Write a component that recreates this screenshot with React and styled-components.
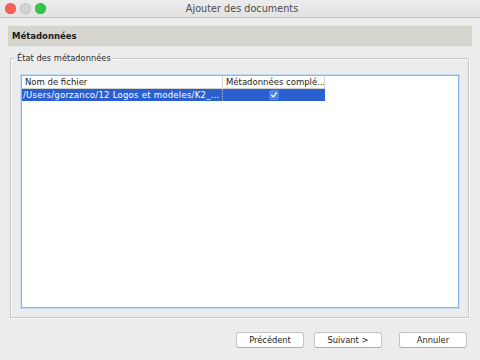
import React from 'react';
import styled, { createGlobalStyle } from 'styled-components';

const Global = createGlobalStyle`
	html, body {
		margin: 0;
		padding: 0;
		background: #ececec;
	}
	body {
		font-family: "DejaVu Sans", "Liberation Sans", sans-serif;
		color: #1c1c1c;
	}
`;

const Window = styled.div`
	width: 480px;
	height: 360px;
	display: flex;
	flex-direction: column;
	background: #ececec;
	overflow: hidden;
`;

const TitleBar = styled.header`
	height: 17px;
	flex: none;
	display: flex;
	align-items: center;
	padding: 0 5px;
	background: linear-gradient(#ececec, #e2e2e2);
	border-bottom: 1px solid #c4c4c4;
	.title {
		flex: 1;
		text-align: center;
		font-size: 9.7px;
		color: #4d4d4d;
		margin-right: 40px;
	}
`;

const Lights = styled.div`
	display: flex;
	gap: 4px;
	width: 44px;
`;

const Light = styled.span`
	width: 11px;
	height: 11px;
	border-radius: 50%;
	background: ${(p) => p.color};
	box-shadow: inset 0 0 0 0.5px rgba(0, 0, 0, 0.15);
`;

const Body = styled.div`
	flex: 1;
	display: flex;
	flex-direction: column;
	padding: 8px 8px 0;
`;

const SectionHeader = styled.div`
	height: 20px;
	display: flex;
	align-items: center;
	padding-left: 4px;
	background: #d5d4cf;
	font-size: 8.5px;
	font-weight: bold;
	color: #1a1a1a;
`;

const Group = styled.fieldset`
	margin: 7px 3px 0 2px;
	padding: 12px 9px 9px 10px;
	border: 1px solid #c9c9c9;
	box-shadow: inset 1px 1px 0 #fafafa, 1px 1px 0 #fafafa;
	legend {
		padding: 0 2px;
		margin-left: -6px;
		font-size: 8.3px;
		color: #2a2a2a;
	}
`;

const Table = styled.div`
	height: 233px;
	box-sizing: border-box;
	background: #fff;
	border: 1px solid #8db6e8;
	box-shadow: 0 0 0 1px #c4dbf4;
	font-size: 8.5px;
`;

const Row = styled.div`
	display: flex;
	height: ${(p) => (p.head ? 13 : 12)}px;
	line-height: ${(p) => (p.head ? 13 : 12)}px;
`;

const HeadCell = styled.div`
	width: ${(p) => p.w}px;
	box-sizing: border-box;
	padding-left: 3px;
	border-right: 1px solid #d2d2d2;
	border-bottom: 1px solid #d2d2d2;
	white-space: nowrap;
	overflow: hidden;
	color: #222;
`;

const Cell = styled.div`
	width: ${(p) => p.w}px;
	box-sizing: border-box;
	padding-left: ${(p) => (p.center ? 0 : 1)}px;
	background: #2b5fd0;
	color: #fff;
	white-space: nowrap;
	overflow: hidden;
	letter-spacing: 0.25px;
	display: flex;
	align-items: center;
	justify-content: ${(p) => (p.center ? 'center' : 'flex-start')};
	border-right: ${(p) => (p.sep ? '1px dotted #9fb8ec' : 'none')};
`;

const Check = styled.span`
	width: 10px;
	height: 10px;
	border-radius: 2px;
	background: #4a86e8;
	display: flex;
	align-items: center;
	justify-content: center;
`;

const Footer = styled.footer`
	display: flex;
	justify-content: flex-end;
	align-items: center;
	padding: 14px 5px 0 0;
`;

const Button = styled.button`
	width: 68px;
	height: 16px;
	margin-left: ${(p) => p.gap}px;
	padding: 0;
	background: #fff;
	border: 1px solid #c3c3c3;
	border-bottom-color: #adadad;
	border-radius: 3px;
	font-family: inherit;
	font-size: 8.3px;
	color: #222;
`;

export default function App() {
	return (
		<Window>
			<Global />
			<TitleBar>
				<Lights>
					<Light color="#fc5f57" />
					<Light color="#d3d3d3" />
					<Light color="#33c748" />
				</Lights>
				<div className="title">Ajouter des documents</div>
			</TitleBar>
			<Body>
				<SectionHeader>Métadonnées</SectionHeader>
				<Group>
					<legend>État des métadonnées</legend>
					<Table>
						<Row head>
							<HeadCell w={201}>Nom de fichier</HeadCell>
							<HeadCell w={102}>Métadonnées complé...</HeadCell>
						</Row>
						<Row>
							<Cell w={201} sep>
								/Users/gorzanco/12 Logos et modeles/K2_...
							</Cell>
							<Cell w={102} center>
								<Check>
									<svg width="8" height="8" viewBox="0 0 8 8">
										<path d="M1.6 4.2 L3.3 5.9 L6.5 1.8" fill="none" stroke="#fff" strokeWidth="1.3" strokeLinecap="round" strokeLinejoin="round" />
									</svg>
								</Check>
							</Cell>
						</Row>
					</Table>
				</Group>
				<Footer>
					<Button>Précédent</Button>
					<Button gap={10}>Suivant &gt;</Button>
					<Button gap={17}>Annuler</Button>
				</Footer>
			</Body>
		</Window>
	);
}
